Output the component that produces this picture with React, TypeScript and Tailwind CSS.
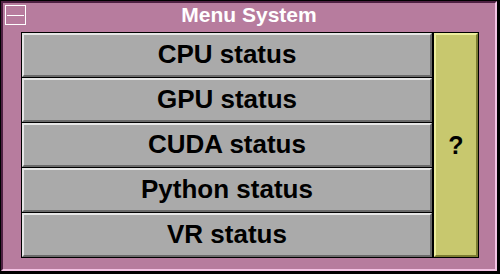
const items = ["CPU status", "GPU status", "CUDA status", "Python status", "VR status"];

function GrayButton({ label }: { label: string }) {
  return (
    <div className="flex-1 flex items-center justify-center border-2 border-t-[#e6e6e6] border-l-[#e6e6e6] border-b-[#6a6a6a] border-r-[#6a6a6a] bg-[#aaaaaa]">
      <span className="text-[26px] font-bold leading-none text-black pb-[2px]">{label}</span>
    </div>
  );
}

export default function App() {
  return (
    <div
      className="w-[500px] h-[274px] bg-black pl-px pt-px pr-[3px] pb-[3px]"
      style={{ fontFamily: '"Liberation Sans", Arial, sans-serif' }}
    >
      <div className="h-full flex flex-col border-2 border-t-[#4e2042] border-l-[#4e2042] border-r-[#f3c2e3] border-b-[#f3c2e3] bg-[#b77c9e]">
        {/* title bar */}
        <div className="relative h-[29px] flex justify-center pt-px">
          <div className="absolute left-[2px] top-[2px] w-[21px] h-[20px] border border-white">
            <div className="absolute left-[1px] right-[1px] top-[9px] h-px bg-white" />
          </div>
          <span className="text-[21px] font-bold leading-[21px] text-white">Menu System</span>
        </div>

        {/* buttons */}
        <div className="flex ml-[18px] h-[226px]">
          <div className="w-[412px] flex flex-col gap-px bg-black border border-black">
            {items.map((it) => (
              <GrayButton key={it} label={it} />
            ))}
          </div>
          <div className="w-[46px] border border-black bg-black flex">
            <div className="flex-1 flex items-center justify-center border-2 border-t-[#eeee9e] border-l-[#eeee9e] border-b-[#7c7c32] border-r-[#7c7c32] bg-[#c8c86e]">
              <span className="text-[25px] font-bold leading-none text-black">?</span>
            </div>
          </div>
        </div>
      </div>
    </div>
  );
}
